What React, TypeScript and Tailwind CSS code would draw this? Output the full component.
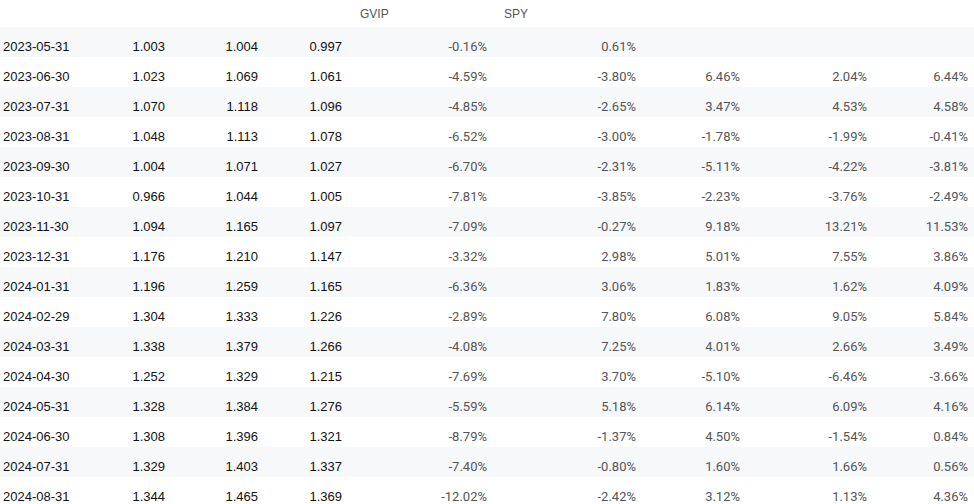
import React from "react";

type Row = [string, string, string, string, string, string, string, string, string];

const rows: Row[] = [
  ["2023-05-31", "1.003", "1.004", "0.997", "-0.16%", "0.61%", "", "", ""],
  ["2023-06-30", "1.023", "1.069", "1.061", "-4.59%", "-3.80%", "6.46%", "2.04%", "6.44%"],
  ["2023-07-31", "1.070", "1.118", "1.096", "-4.85%", "-2.65%", "3.47%", "4.53%", "4.58%"],
  ["2023-08-31", "1.048", "1.113", "1.078", "-6.52%", "-3.00%", "-1.78%", "-1.99%", "-0.41%"],
  ["2023-09-30", "1.004", "1.071", "1.027", "-6.70%", "-2.31%", "-5.11%", "-4.22%", "-3.81%"],
  ["2023-10-31", "0.966", "1.044", "1.005", "-7.81%", "-3.85%", "-2.23%", "-3.76%", "-2.49%"],
  ["2023-11-30", "1.094", "1.165", "1.097", "-7.09%", "-0.27%", "9.18%", "13.21%", "11.53%"],
  ["2023-12-31", "1.176", "1.210", "1.147", "-3.32%", "2.98%", "5.01%", "7.55%", "3.86%"],
  ["2024-01-31", "1.196", "1.259", "1.165", "-6.36%", "3.06%", "1.83%", "1.62%", "4.09%"],
  ["2024-02-29", "1.304", "1.333", "1.226", "-2.89%", "7.80%", "6.08%", "9.05%", "5.84%"],
  ["2024-03-31", "1.338", "1.379", "1.266", "-4.08%", "7.25%", "4.01%", "2.66%", "3.49%"],
  ["2024-04-30", "1.252", "1.329", "1.215", "-7.69%", "3.70%", "-5.10%", "-6.46%", "-3.66%"],
  ["2024-05-31", "1.328", "1.384", "1.276", "-5.59%", "5.18%", "6.14%", "6.09%", "4.16%"],
  ["2024-06-30", "1.308", "1.396", "1.321", "-8.79%", "-1.37%", "4.50%", "-1.54%", "0.84%"],
  ["2024-07-31", "1.329", "1.403", "1.337", "-7.40%", "-0.80%", "1.60%", "1.66%", "0.56%"],
  ["2024-08-31", "1.344", "1.465", "1.369", "-12.02%", "-2.42%", "3.12%", "1.13%", "4.36%"],
];

const grid = "grid grid-cols-[100px_65px_93px_84px_145px_149px_104px_127px_101px] pr-[6px]";
const arial = "font-['Liberation_Sans',Arial,sans-serif]";
const roboto = "font-['Roboto',sans-serif]";

export default function App() {
  return (
    <div className="w-[974px] bg-white">
      <div className={`${grid} h-[27px] items-center text-[12px] text-[#555] ${arial}`}>
        <div />
        <div />
        <div />
        <div />
        <div className="pl-[18px]">GVIP</div>
        <div className="pl-[17px]">SPY</div>
        <div />
        <div />
        <div />
      </div>
      {rows.map((r, i) => (
        <div
          key={r[0]}
          className={`${grid} h-[30px] items-center pt-[10px] ${i % 2 === 0 ? "bg-[#f7f8fa]" : "bg-white"}`}
        >
          <div className={`pl-[3px] text-[13px] text-[#111] ${arial}`}>{r[0]}</div>
          {r.slice(1, 4).map((v, j) => (
            <div key={j} className={`text-right text-[13px] text-[#111] ${arial}`}>
              {v}
            </div>
          ))}
          {r.slice(4).map((v, j) => (
            <div key={j} className={`text-right text-[13px] text-[#555] ${roboto}`}>
              {v}
            </div>
          ))}
        </div>
      ))}
    </div>
  );
}
